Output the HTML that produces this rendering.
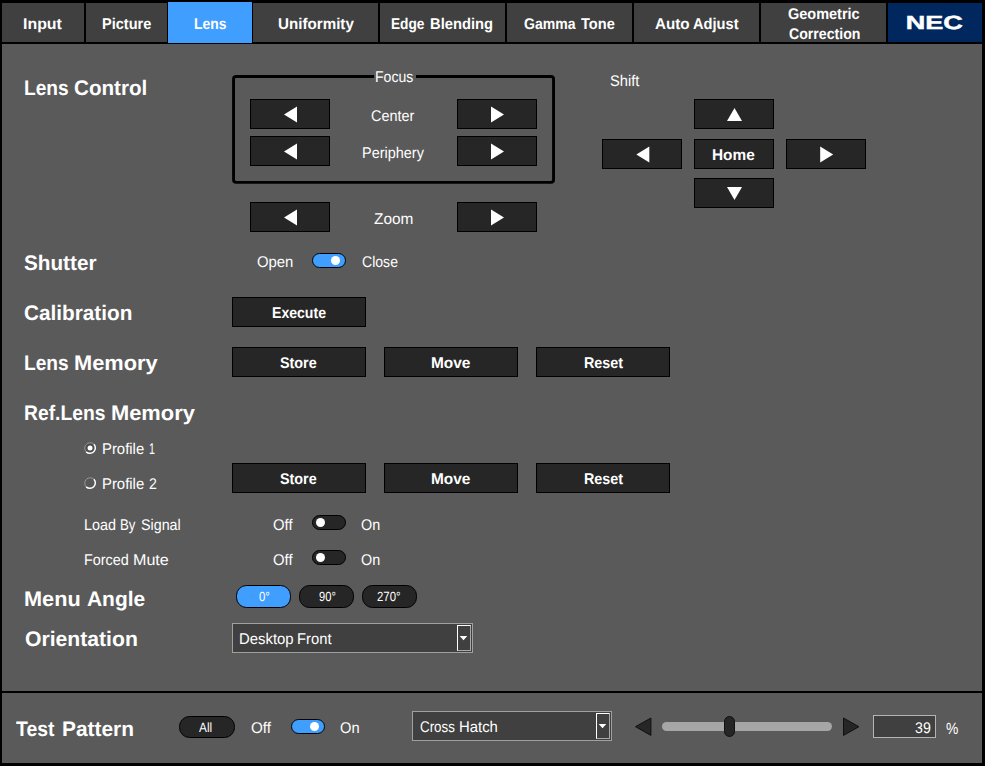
<!DOCTYPE html>
<html lang="en"><head><meta charset="utf-8"><title>Lens</title>
<style>
html,body{margin:0;padding:0;background:#000;}
#app{position:relative;width:985px;height:766px;background:#000;overflow:hidden;font-family:"Liberation Sans", sans-serif;color:#ffffff;}
#app div{position:absolute;}
#app svg{position:absolute;left:0;top:0;}
#app span{position:absolute;white-space:nowrap;line-height:1;transform-origin:0 0;text-rendering:geometricPrecision;}
#app span.b{font-weight:bold;}
</style></head><body>
<div id="app">
<div style="left:2px;top:44px;width:980px;height:647px;background:#5a5a5a"></div>
<div style="left:2px;top:693px;width:980px;height:70px;background:#5a5a5a"></div>
<div style="left:2px;top:3px;width:82px;height:39px;background:#404040"></div>
<div style="left:86px;top:3px;width:81px;height:39px;background:#404040"></div>
<div style="left:168px;top:2px;width:84px;height:41px;background:#409eff"></div>
<div style="left:253px;top:3px;width:125px;height:39px;background:#404040"></div>
<div style="left:380px;top:3px;width:125px;height:39px;background:#404040"></div>
<div style="left:507px;top:3px;width:125px;height:39px;background:#404040"></div>
<div style="left:634px;top:3px;width:125px;height:39px;background:#404040"></div>
<div style="left:761px;top:3px;width:125px;height:39px;background:#404040"></div>
<div style="left:888px;top:3px;width:94px;height:39px;background:#00285f"></div>
<div style="left:250px;top:99px;width:80px;height:30px;background:#262626;border:1px solid #000;box-sizing:border-box"></div>
<div style="left:457px;top:99px;width:80px;height:30px;background:#262626;border:1px solid #000;box-sizing:border-box"></div>
<div style="left:250px;top:136px;width:80px;height:30px;background:#262626;border:1px solid #000;box-sizing:border-box"></div>
<div style="left:457px;top:136px;width:80px;height:30px;background:#262626;border:1px solid #000;box-sizing:border-box"></div>
<div style="left:250px;top:202px;width:80px;height:30px;background:#262626;border:1px solid #000;box-sizing:border-box"></div>
<div style="left:457px;top:202px;width:80px;height:30px;background:#262626;border:1px solid #000;box-sizing:border-box"></div>
<div style="left:694px;top:99px;width:80px;height:30px;background:#262626;border:1px solid #000;box-sizing:border-box"></div>
<div style="left:694px;top:139px;width:80px;height:30px;background:#262626;border:1px solid #000;box-sizing:border-box"></div>
<div style="left:694px;top:178px;width:80px;height:30px;background:#262626;border:1px solid #000;box-sizing:border-box"></div>
<div style="left:602px;top:139px;width:80px;height:30px;background:#262626;border:1px solid #000;box-sizing:border-box"></div>
<div style="left:786px;top:139px;width:80px;height:30px;background:#262626;border:1px solid #000;box-sizing:border-box"></div>
<div style="left:312px;top:253px;width:34px;height:15px;background:#409eff;border:1px solid #000;border-radius:7.5px;box-sizing:border-box"><div style="left:17.8px;top:1.7px;width:9.6px;height:9.6px;border-radius:50%;background:#fff"></div></div>
<div style="left:312px;top:515px;width:34px;height:15px;background:#262626;border:1px solid #000;border-radius:7.5px;box-sizing:border-box"><div style="left:2.8px;top:1.7px;width:9.6px;height:9.6px;border-radius:50%;background:#fff"></div></div>
<div style="left:312px;top:550px;width:34px;height:15px;background:#262626;border:1px solid #000;border-radius:7.5px;box-sizing:border-box"><div style="left:2.8px;top:1.7px;width:9.6px;height:9.6px;border-radius:50%;background:#fff"></div></div>
<div style="left:291px;top:719px;width:34px;height:15px;background:#409eff;border:1px solid #000;border-radius:7.5px;box-sizing:border-box"><div style="left:17.8px;top:1.7px;width:9.6px;height:9.6px;border-radius:50%;background:#fff"></div></div>
<div style="left:232px;top:297px;width:134px;height:30px;background:#262626;border:1px solid #000;box-sizing:border-box"></div>
<div style="left:232px;top:347px;width:134px;height:30px;background:#262626;border:1px solid #000;box-sizing:border-box"></div>
<div style="left:384px;top:347px;width:134px;height:30px;background:#262626;border:1px solid #000;box-sizing:border-box"></div>
<div style="left:536px;top:347px;width:134px;height:30px;background:#262626;border:1px solid #000;box-sizing:border-box"></div>
<div style="left:232px;top:463px;width:134px;height:30px;background:#262626;border:1px solid #000;box-sizing:border-box"></div>
<div style="left:384px;top:463px;width:134px;height:30px;background:#262626;border:1px solid #000;box-sizing:border-box"></div>
<div style="left:536px;top:463px;width:134px;height:30px;background:#262626;border:1px solid #000;box-sizing:border-box"></div>
<div style="left:236px;top:585px;width:55px;height:23px;background:#409eff;border:1px solid #000;border-radius:10.5px;box-sizing:border-box"></div>
<div style="left:299px;top:585px;width:55px;height:23px;background:#262626;border:1px solid #000;border-radius:10.5px;box-sizing:border-box"></div>
<div style="left:362px;top:585px;width:55px;height:23px;background:#262626;border:1px solid #000;border-radius:10.5px;box-sizing:border-box"></div>
<div style="left:179px;top:716px;width:56px;height:22px;background:#262626;border:1px solid #000;border-radius:10.5px;box-sizing:border-box"></div>
<div style="left:232px;top:623px;width:241px;height:30px;background:#404040;border:1px solid #a0a0a0;box-sizing:border-box"></div><div style="left:457px;top:625px;width:14px;height:26px;background:#404040;border:1px solid #a8a8a8;border-top-color:#fff;border-left-color:#fff;box-sizing:border-box"></div>
<div style="left:412px;top:711px;width:200px;height:30px;background:#404040;border:1px solid #a0a0a0;box-sizing:border-box"></div><div style="left:596px;top:713px;width:14px;height:26px;background:#404040;border:1px solid #a8a8a8;border-top-color:#fff;border-left-color:#fff;box-sizing:border-box"></div>
<div style="left:662px;top:722px;width:170px;height:9.399999999999977px;background:#a6a6a6;border-radius:5px"></div>
<div style="left:724px;top:716px;width:11px;height:21px;background:#262626;border:1px solid #111;border-radius:5.5px;box-sizing:border-box"></div>
<div style="left:873px;top:715px;width:63px;height:23px;background:#404040;border:1px solid #b4b4b4;box-sizing:border-box"></div>
<svg width="985" height="766" viewBox="0 0 985 766"><rect x="233.55" y="76.45" width="320" height="105.9" rx="2.6" fill="none" stroke="#000" stroke-width="2.9"/><rect x="374" y="73" width="42" height="7" fill="#5a5a5a"/>
<polygon points="297.0,106.4 297.0,122.4 284.0,114.4" fill="#fff"/>
<polygon points="491.0,106.4 491.0,122.4 504.0,114.4" fill="#fff"/>
<polygon points="297.0,143.4 297.0,159.4 284.0,151.4" fill="#fff"/>
<polygon points="491.0,143.4 491.0,159.4 504.0,151.4" fill="#fff"/>
<polygon points="297.0,209.4 297.0,225.4 284.0,217.4" fill="#fff"/>
<polygon points="491.0,209.4 491.0,225.4 504.0,217.4" fill="#fff"/>
<polygon points="727.0,121.0 742.0,121.0 734.5,108.0" fill="#fff"/>
<polygon points="727.0,187.0 742.0,187.0 734.5,200.0" fill="#fff"/>
<polygon points="649.3,146.4 649.3,162.4 636.3,154.4" fill="#fff"/>
<polygon points="820.2,146.4 820.2,162.4 833.2,154.4" fill="#fff"/>
<circle cx="90.05" cy="448.05" r="5.45" fill="#4b4b4b"/><path d="M93.90 444.20A5.45 5.45 0 0 0 86.20 451.90" fill="none" stroke="#989898" stroke-width="1"/><path d="M93.90 444.20A5.45 5.45 0 0 1 86.20 451.90" fill="none" stroke="#ffffff" stroke-width="1.5"/><circle cx="90.05" cy="448.05" r="2.5" fill="#fff"/>
<circle cx="90.05" cy="483.05" r="5.45" fill="#575757"/><path d="M93.90 479.20A5.45 5.45 0 0 0 86.20 486.90" fill="none" stroke="#989898" stroke-width="1"/><path d="M93.90 479.20A5.45 5.45 0 0 1 86.20 486.90" fill="none" stroke="#ffffff" stroke-width="1.5"/>
<rect x="252.2" y="595.2" width="1.2" height="1.2" fill="#6f8aa6"/>
<text x="0" y="0" transform="translate(905.7 29.4) scale(1.425 1)" font-family="Liberation Sans, sans-serif" font-weight="bold" font-size="19" fill="#fff" stroke="#fff" stroke-width="0.45" text-rendering="geometricPrecision">NEC</text>
<polygon points="459.7,636.1 467.3,636.1 463.5,640.3000000000001" fill="#fff"/>
<polygon points="598.7,724.1 606.3,724.1 602.5,728.3000000000001" fill="#fff"/>
<polygon points="650.9000000000001,718.0 650.9000000000001,735.4000000000001 635.5,726.7" fill="#262626" stroke="#101010" stroke-width="1" stroke-linejoin="miter"/>
<polygon points="843.5,718.0 843.5,735.4000000000001 858.9000000000001,726.7" fill="#262626" stroke="#101010" stroke-width="1" stroke-linejoin="miter"/></svg>
<span class="b" style="left:23.3px;top:16px;font-size:15.5px;line-height:17px;transform-origin:0 14px;transform:scale(1.0270,1)">Input</span>
<span class="b" style="left:101.5px;top:16px;font-size:15.5px;line-height:17px;transform-origin:0 14px;transform:scale(0.9379,1)">Picture</span>
<span class="b" style="left:193.8px;top:16px;font-size:15.5px;line-height:17px;transform-origin:0 14px;transform:scale(0.8971,1)">Lens</span>
<span class="b" style="left:277.5px;top:16px;font-size:15.5px;line-height:17px;transform-origin:0 14px;transform:scale(0.9784,1)">Uniformity</span>
<label><span class="b" style="left:391.4px;top:16px;font-size:15.5px;line-height:17px;transform-origin:0 14px;transform:scale(0.8826,1)">Edge</span>
 <span class="b" style="left:430.3px;top:16px;font-size:15.5px;line-height:17px;transform-origin:0 14px;transform:scale(0.9502,1)">Blending</span>
</label>
<label><span class="b" style="left:523.9px;top:16px;font-size:15.5px;line-height:17px;transform-origin:0 14px;transform:scale(0.9067,1)">Gamma</span>
 <span class="b" style="left:581.2px;top:16px;font-size:15.5px;line-height:17px;transform-origin:0 14px;transform:scale(0.9406,1)">Tone</span>
</label>
<label><span class="b" style="left:654.6px;top:16px;font-size:15.5px;line-height:17px;transform-origin:0 14px;transform:scale(0.9792,1)">Auto</span>
 <span class="b" style="left:693.0px;top:16px;font-size:15.5px;line-height:17px;transform-origin:0 14px;transform:scale(0.9447,1)">Adjust</span>
</label>
<span class="b" style="left:787.6px;top:6px;font-size:15.5px;line-height:17px;transform-origin:0 14px;transform:scale(0.9345,1)">Geometric</span>
<span class="b" style="left:788.9px;top:26px;font-size:15.5px;line-height:17px;transform-origin:0 14px;transform:scale(0.9114,1)">Correction</span>
<label><span class="b" style="left:24.0px;top:77px;font-size:21px;line-height:23px;transform-origin:0 19px;transform:scale(0.9105,1)">Lens</span>
 <span class="b" style="left:74.4px;top:77px;font-size:21px;line-height:23px;transform-origin:0 19px;transform:scale(0.9822,1)">Control</span>
</label>
<span class="b" style="left:24.4px;top:252px;font-size:21px;line-height:23px;transform-origin:0 19px;transform:scale(0.9860,1)">Shutter</span>
<span class="b" style="left:24.4px;top:302px;font-size:21px;line-height:23px;transform-origin:0 19px;transform:scale(0.9876,1)">Calibration</span>
<label><span class="b" style="left:24.0px;top:352px;font-size:21px;line-height:23px;transform-origin:0 19px;transform:scale(0.9105,1)">Lens</span>
 <span class="b" style="left:73.8px;top:352px;font-size:21px;line-height:23px;transform-origin:0 19px;transform:scale(1.0395,1)">Memory</span>
</label>
<label><span class="b" style="left:24.0px;top:402px;font-size:21px;line-height:23px;transform-origin:0 19px;transform:scale(0.9183,1)">Ref.Lens</span>
 <span class="b" style="left:110.8px;top:402px;font-size:21px;line-height:23px;transform-origin:0 19px;transform:scale(1.0408,1)">Memory</span>
</label>
<label><span class="b" style="left:23.9px;top:588px;font-size:21px;line-height:23px;transform-origin:0 19px;transform:scale(1.0340,1)">Menu</span>
 <span class="b" style="left:86.6px;top:588px;font-size:21px;line-height:23px;transform-origin:0 19px;transform:scale(0.9973,1)">Angle</span>
</label>
<span class="b" style="left:24.9px;top:628px;font-size:21px;line-height:23px;transform-origin:0 19px;transform:scale(1.0074,1)">Orientation</span>
<label><span class="b" style="left:16.4px;top:718px;font-size:21px;line-height:23px;transform-origin:0 19px;transform:scale(0.9225,1)">Test</span>
 <span class="b" style="left:61.6px;top:718px;font-size:21px;line-height:23px;transform-origin:0 19px;transform:scale(0.9954,1)">Pattern</span>
</label>
<span style="left:375.1px;top:69px;font-size:15.5px;line-height:17px;transform-origin:0 14px;transform:scale(0.9069,1)">Focus</span>
<span style="left:371.2px;top:108px;font-size:15.5px;line-height:17px;transform-origin:0 14px;transform:scale(0.9297,1)">Center</span>
<span style="left:361.5px;top:145px;font-size:15.5px;line-height:17px;transform-origin:0 14px;transform:scale(0.9331,1)">Periphery</span>
<span style="left:373.6px;top:211px;font-size:15.5px;line-height:17px;transform-origin:0 14px;transform:scale(0.9946,1)">Zoom</span>
<span style="left:609.8px;top:73px;font-size:15.5px;line-height:17px;transform-origin:0 14px;transform:scale(0.9461,1)">Shift</span>
<span class="b" style="left:712.1px;top:147px;font-size:15.5px;line-height:17px;transform-origin:0 14px;transform:scale(0.9919,1)">Home</span>
<span style="left:256.8px;top:254px;font-size:15.5px;line-height:17px;transform-origin:0 14px;transform:scale(0.9599,1)">Open</span>
<span style="left:362.1px;top:254px;font-size:15.5px;line-height:17px;transform-origin:0 14px;transform:scale(0.9075,1)">Close</span>
<span class="b" style="left:271.6px;top:305px;font-size:15.5px;line-height:17px;transform-origin:0 14px;transform:scale(0.9077,1)">Execute</span>
<span class="b" style="left:280.4px;top:355px;font-size:15.5px;line-height:17px;transform-origin:0 14px;transform:scale(0.9250,1)">Store</span>
<span class="b" style="left:431.0px;top:355px;font-size:15.5px;line-height:17px;transform-origin:0 14px;transform:scale(0.9949,1)">Move</span>
<span class="b" style="left:583.6px;top:355px;font-size:15.5px;line-height:17px;transform-origin:0 14px;transform:scale(0.9256,1)">Reset</span>
<span class="b" style="left:280.4px;top:471px;font-size:15.5px;line-height:17px;transform-origin:0 14px;transform:scale(0.9250,1)">Store</span>
<span class="b" style="left:431.0px;top:471px;font-size:15.5px;line-height:17px;transform-origin:0 14px;transform:scale(0.9949,1)">Move</span>
<span class="b" style="left:583.6px;top:471px;font-size:15.5px;line-height:17px;transform-origin:0 14px;transform:scale(0.9256,1)">Reset</span>
<label><span style="left:101.6px;top:441px;font-size:15.5px;line-height:17px;transform-origin:0 14px;transform:scale(0.9595,1)">Profile</span>
 <span style="left:148.9px;top:441px;font-size:15.5px;line-height:17px;transform-origin:0 14px;transform:scale(0.6857,1)">1</span>
</label>
<label><span style="left:101.6px;top:476px;font-size:15.5px;line-height:17px;transform-origin:0 14px;transform:scale(0.9595,1)">Profile</span>
 <span style="left:148.6px;top:476px;font-size:15.5px;line-height:17px;transform-origin:0 14px;transform:scale(0.9125,1)">2</span>
</label>
<label><span style="left:83.8px;top:517px;font-size:15.5px;line-height:17px;transform-origin:0 14px;transform:scale(0.9281,1)">Load</span>
 <span style="left:120.2px;top:517px;font-size:15.5px;line-height:17px;transform-origin:0 14px;transform:scale(0.8536,1)">By</span>
 <span style="left:140.8px;top:517px;font-size:15.5px;line-height:17px;transform-origin:0 14px;transform:scale(0.9216,1)">Signal</span>
</label>
<label><span style="left:83.8px;top:552px;font-size:15.5px;line-height:17px;transform-origin:0 14px;transform:scale(0.9288,1)">Forced</span>
 <span style="left:132.5px;top:552px;font-size:15.5px;line-height:17px;transform-origin:0 14px;transform:scale(1.0384,1)">Mute</span>
</label>
<span style="left:272.8px;top:517px;font-size:15.5px;line-height:17px;transform-origin:0 14px;transform:scale(0.9581,1)">Off</span>
<span style="left:360.5px;top:517px;font-size:15.5px;line-height:17px;transform-origin:0 14px;transform:scale(0.9274,1)">On</span>
<span style="left:272.8px;top:552px;font-size:15.5px;line-height:17px;transform-origin:0 14px;transform:scale(0.9581,1)">Off</span>
<span style="left:360.5px;top:552px;font-size:15.5px;line-height:17px;transform-origin:0 14px;transform:scale(0.9274,1)">On</span>
<span style="left:259.3px;top:589px;font-size:13.3px;line-height:15px;transform-origin:0 12px;transform:scale(0.8552,1)">0°</span>
<span style="left:318.7px;top:589px;font-size:13.3px;line-height:15px;transform-origin:0 12px;transform:scale(0.8388,1)">90°</span>
<span style="left:377.3px;top:589px;font-size:13.3px;line-height:15px;transform-origin:0 12px;transform:scale(0.8571,1)">270°</span>
<label><span style="left:238.8px;top:631px;font-size:15.5px;line-height:17px;transform-origin:0 14px;transform:scale(0.9612,1)">Desktop</span>
 <span style="left:297.4px;top:631px;font-size:15.5px;line-height:17px;transform-origin:0 14px;transform:scale(0.9534,1)">Front</span>
</label>
<span style="left:198.5px;top:720px;font-size:13.3px;line-height:15px;transform-origin:0 12px;transform:scale(0.8905,1)">All</span>
<span style="left:251.4px;top:720px;font-size:15.5px;line-height:17px;transform-origin:0 14px;transform:scale(0.9818,1)">Off</span>
<span style="left:340.3px;top:720px;font-size:15.5px;line-height:17px;transform-origin:0 14px;transform:scale(0.9473,1)">On</span>
<label><span style="left:419.5px;top:719px;font-size:15.5px;line-height:17px;transform-origin:0 14px;transform:scale(0.8619,1)">Cross</span>
 <span style="left:459.1px;top:719px;font-size:15.5px;line-height:17px;transform-origin:0 14px;transform:scale(0.9596,1)">Hatch</span>
</label>
<span style="left:915.3px;top:720px;font-size:15.5px;line-height:17px;transform-origin:0 14px;transform:scale(0.9145,1)">39</span>
<span style="left:946.2px;top:720px;font-size:16.2px;line-height:18px;transform-origin:0 15px;transform:scale(0.8571,1)">%</span>
</div>
</body></html>
